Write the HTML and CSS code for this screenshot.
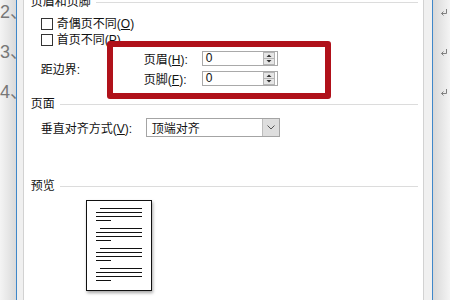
FILE: index.html
```html
<!DOCTYPE html>
<html>
  <head>
    <title>页面设置</title>
    <link rel="stylesheet" href="styles.css">
  </head>
  <body>
    <div class="screen">
      <!-- 文档左侧 -->
      <div class="doc-left">
        <div class="num">2、</div>
        <div class="num">3、</div>
        <div class="num">4、</div>
      </div>
      <div class="edge"></div>

      <div class="frame">
        <div class="dialog">
          <!-- 页眉和页脚 -->
          <div class="group-title first">页眉和页脚</div>
          <div class="check"><span class="box"></span><span>奇偶页不同(<u>O</u>)</span></div>
          <div class="check"><span class="box"></span><span>首页不同(<u>P</u>)</span></div>

          <div class="margins">
            <div class="margins-label">距边界:</div>
            <div class="fields">
              <div class="field">
                <span class="field-label">页眉(<u>H</u>):</span>
                <div class="spin-input">
                  <span>0</span>
                  <svg class="spin" width="12" height="13" viewBox="0 0 12 13">
                    <rect x="0.5" y="0.5" width="11" height="12" fill="#e6e6e6" stroke="#b4b4b4" />
                    <line x1="1" y1="6.5" x2="11" y2="6.5" stroke="#b4b4b4" />
                    <polygon points="3.5,5 6,2.5 8.5,5" fill="#333" />
                    <polygon points="3.5,8 8.5,8 6,10.5" fill="#333" />
                  </svg>
                </div>
              </div>
              <div class="field">
                <span class="field-label">页脚(<u>F</u>):</span>
                <div class="spin-input">
                  <span>0</span>
                  <svg class="spin" width="12" height="13" viewBox="0 0 12 13">
                    <rect x="0.5" y="0.5" width="11" height="12" fill="#e6e6e6" stroke="#b4b4b4" />
                    <line x1="1" y1="6.5" x2="11" y2="6.5" stroke="#b4b4b4" />
                    <polygon points="3.5,5 6,2.5 8.5,5" fill="#333" />
                    <polygon points="3.5,8 8.5,8 6,10.5" fill="#333" />
                  </svg>
                </div>
              </div>
            </div>
          </div>

          <!-- 页面 -->
          <div class="group-title page-title">页面</div>
          <div class="select-row">
            <span class="select-label">垂直对齐方式(<u>V</u>):</span>
            <div class="select">
              <span class="select-value">顶端对齐</span>
              <span class="select-btn">
                <svg width="8" height="5" viewBox="0 0 8 5">
                  <polyline points="0.5,0.5 4,4 7.5,0.5" fill="none" stroke="#555" />
                </svg>
              </span>
            </div>
          </div>

          <!-- 预览 -->
          <div class="group-title preview-title">预览</div>
          <div class="page">
            <div class="para"><i class="ln indent"></i><i class="ln"></i><i class="ln"></i><i class="ln short"></i></div>
            <div class="para"><i class="ln indent"></i><i class="ln"></i><i class="ln"></i><i class="ln short"></i></div>
            <div class="para"><i class="ln indent"></i><i class="ln"></i><i class="ln"></i><i class="ln short"></i></div>
            <div class="para"><i class="ln indent"></i><i class="ln"></i><i class="ln"></i><i class="ln short"></i></div>
          </div>
        </div>
      </div>

      <div class="edge"></div>
      <!-- 文档右侧 段落标记 -->
      <div class="doc-right">
        <svg class="mark" width="8" height="7" viewBox="0 0 8 7"><path d="M6.5 0 V4.5 H1.5 M3.5 2.5 L1.5 4.5 L3.5 6.5" fill="none" stroke="#808080" /></svg>
        <svg class="mark" width="8" height="7" viewBox="0 0 8 7"><path d="M6.5 0 V4.5 H1.5 M3.5 2.5 L1.5 4.5 L3.5 6.5" fill="none" stroke="#808080" /></svg>
        <svg class="mark" width="8" height="7" viewBox="0 0 8 7"><path d="M6.5 0 V4.5 H1.5 M3.5 2.5 L1.5 4.5 L3.5 6.5" fill="none" stroke="#808080" /></svg>
      </div>

      <!-- 红框标注 -->
      <div class="highlight"></div>
    </div>
  </body>
</html>
```

FILE: styles.css
```css
body {
  margin: 0;
}
.screen {
  position: relative;
  display: flex;
  width: 450px;
  height: 300px;
  overflow: hidden;
  font-family: "Liberation Sans", "Noto Sans CJK SC", sans-serif;
  font-size: 12px;
  color: #111;
}
.doc-left {
  width: 17px;
  overflow: hidden;
  background: linear-gradient(to right, #f4f4f4, #dadada);
}
.num {
  height: 40px;
  font-family: "Liberation Sans", "Noto Sans CJK SC", sans-serif;
  font-size: 18px;
  line-height: 24px;
  color: #777;
  white-space: nowrap;
}
.edge {
  width: 1px;
  background: #3f87c9;
}
.frame {
  display: flex;
  background: #f0f0f0;
  padding: 0 8px 0 6px;
}
.dialog {
  width: 387px;
  padding: 0 5px 0 7px;
  background: #fff;
  border-left: 1px solid #d2d2d2;
  border-right: 1px solid #d2d2d2;
}
.group-title {
  display: flex;
  align-items: center;
  gap: 5px;
  height: 16px;
  line-height: 16px;
}
.group-title::after {
  content: "";
  flex: 1;
  border-top: 1px solid #dcdcdc;
}
.group-title.first {
  margin-top: -6px;
}
.check {
  display: flex;
  align-items: center;
  gap: 4px;
  height: 16px;
  line-height: 16px;
  margin-left: 10px;
}
.check:nth-of-type(2) {
  margin-top: 6px;
}
.box {
  width: 10px;
  height: 10px;
  border: 1px solid #333;
  background: #fff;
}
.margins {
  display: flex;
  align-items: center;
  margin: 3px 0 0 10px;
}
.margins-label {
  width: 103px;
}
.fields {
  display: flex;
  flex-direction: column;
  gap: 5px;
}
.field {
  display: flex;
  align-items: center;
  height: 15px;
}
.field-label {
  width: 58px;
}
.spin-input {
  display: flex;
  align-items: center;
  justify-content: space-between;
  box-sizing: border-box;
  width: 76px;
  height: 15px;
  padding: 0 2px 0 3px;
  border: 1px solid #a9a9a9;
  line-height: 13px;
}
.spin {
  display: block;
}
.page-title {
  margin-top: 10px;
}
.select-row {
  display: flex;
  align-items: center;
  margin: 6px 0 0 10px;
}
.select-label {
  width: 105px;
}
.select {
  display: flex;
  align-items: center;
  justify-content: space-between;
  box-sizing: border-box;
  width: 134px;
  height: 19px;
  padding: 0 0 0 5px;
  border: 1px solid #a4a4a4;
}
.select-btn {
  display: flex;
  align-items: center;
  justify-content: center;
  width: 16px;
  height: 17px;
  background: #dedede;
  border-left: 1px solid #bdbdbd;
}
.preview-title {
  margin-top: 41px;
}
.page {
  box-sizing: border-box;
  width: 66px;
  height: 91px;
  margin: 6px 0 0 55px;
  padding: 7px 9px 0;
  border: 1px solid #111;
  box-shadow: 1px 2px 3px rgba(0, 0, 0, 0.35);
}
.para {
  display: flex;
  flex-direction: column;
  gap: 3px;
  margin-bottom: 7px;
}
.ln {
  display: block;
  height: 1px;
  background: #111;
}
.ln.indent {
  margin-left: 4px;
}
.ln.short {
  width: 15px;
}
.doc-right {
  display: flex;
  flex-direction: column;
  align-items: flex-start;
  gap: 33px;
  width: 18px;
  padding: 9px 0 0 7px;
  box-sizing: border-box;
  background: linear-gradient(to right, #d8d8d8, #f4f4f4);
}
.mark {
  display: block;
}
.highlight {
  position: absolute;
  left: 107px;
  top: 41px;
  width: 212px;
  height: 46px;
  border: 6px solid #b0111a;
  border-radius: 3px;
}
```
